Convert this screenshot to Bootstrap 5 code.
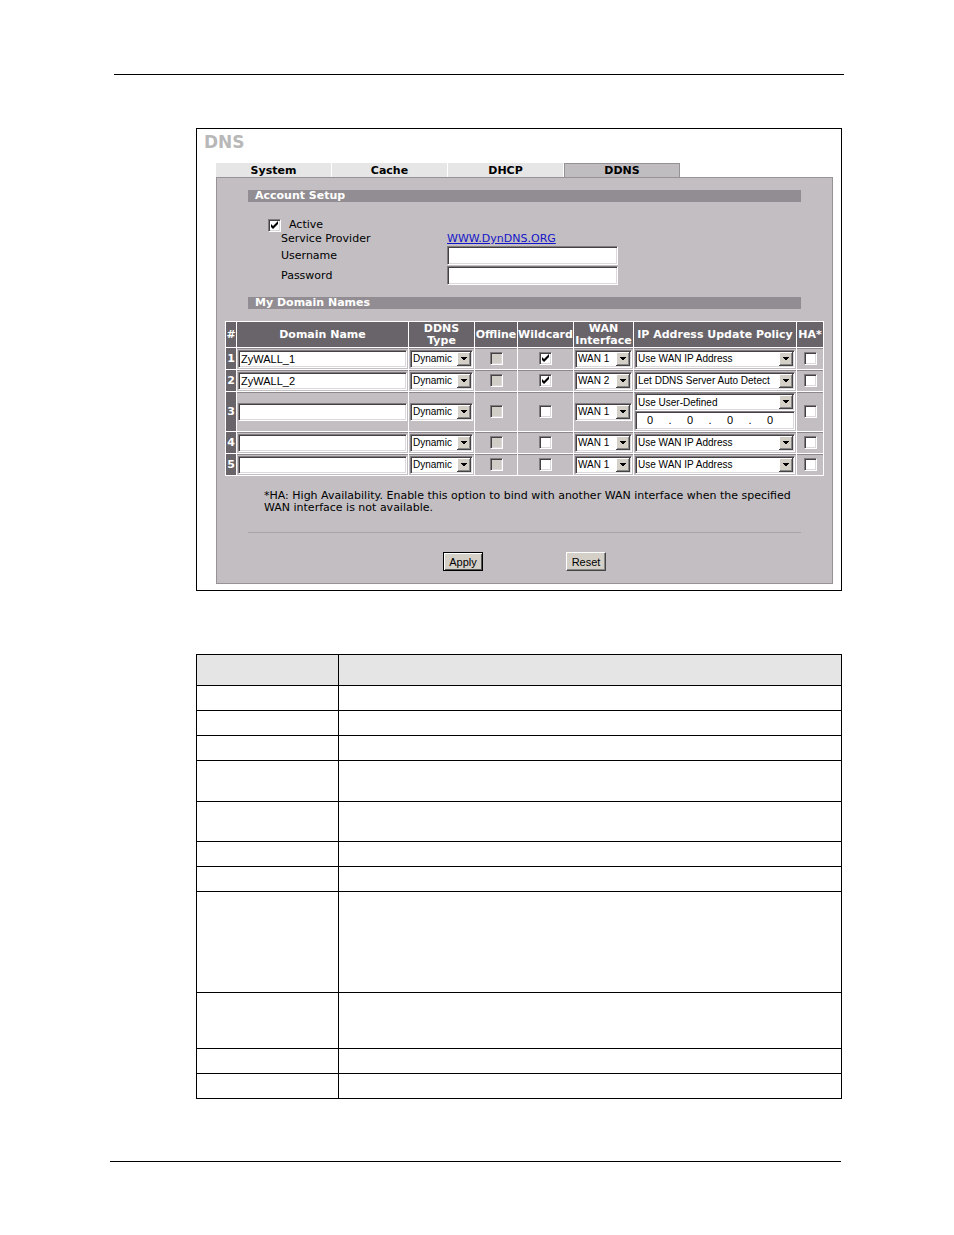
<!DOCTYPE html>
<html lang="en">
<head>
<meta charset="utf-8">
<meta name="viewport" content="width=device-width, initial-scale=1">
<title>DNS - DDNS</title>
<link href="https://cdn.jsdelivr.net/npm/bootstrap@5.3.0/dist/css/bootstrap.min.css" rel="stylesheet">
<style>
body{background:#fff;color:#000;font:11px/15px "DejaVu Sans",sans-serif}
.sheet{padding:74px 110px 0}
.rule{border-top:1px solid #000}
.rule-top{margin:0 0 53px 4px}
.rule-foot{margin:62px 3px 0 0}
.body-col{margin:0 2px 0 86px}
.figure-box{border:1px solid #000;padding:4px 8px 6px 19px}
.page-title{font-size:17px;line-height:18px;font-weight:700;color:#b8b8b8;margin:0 0 12px -12px}
.tab-strip a{flex:0 0 116px;height:14px;line-height:15px;text-align:center;font-weight:700;color:#000;background:#e6e6e6;border-right:1px solid #fff;text-decoration:none}
.tab-strip a.active{line-height:14px;background:#bfbdbf;border:1px solid #959195;border-bottom:0}
.panel{background:#c2bec2;border:1px solid #969296;padding:12px 8px}
.section-bar{background:#928d92;color:#fff;font-size:11px;font-weight:700;line-height:12px;margin:0 23px;padding-left:7px}
.account{margin:16px 23px 12px;line-height:14px}
.account .name-col{width:199px;padding-left:33px;flex:none}
.account a{color:#1414c8;text-decoration:underline}
.account .fields{row-gap:1px}
.sunken{appearance:none;border:1px solid;border-color:#807c80 #fff #fff #807c80;box-shadow:inset 1px 1px 0 #444044,inset -1px -1px 0 #dcd8dc;background-color:#fff;border-radius:0;color:#000;font:11px/13px "Liberation Sans",sans-serif}
.field{height:19px;width:171px;padding:0 2px}
.tick{width:13px;height:13px;display:block;margin:0 auto;background-position:center;background-repeat:no-repeat}
.tick:checked{background-image:url("data:image/svg+xml,%3Csvg xmlns='http://www.w3.org/2000/svg' width='9' height='9'%3E%3Cpath d='M1 3v3l2 2 5-5V0L3 5z'/%3E%3C/svg%3E")}
.tick:disabled{background-color:#d0ccc6}
.drop{display:block;height:18px;width:100%;font-size:10px;padding:0 14px 0 2px;background-repeat:no-repeat;background-position:right 1px center;background-image:url("data:image/svg+xml,%3Csvg xmlns='http://www.w3.org/2000/svg' width='14' height='14' shape-rendering='crispEdges'%3E%3Cpath fill='%23444' d='M0 0h14v14H0z'/%3E%3Cpath fill='%23fff' d='M0 0h13v13H0z'/%3E%3Cpath fill='%23888' d='M1 1h12v12H1z'/%3E%3Cpath fill='%23d4d0c8' d='M1 1h11v11H1z'/%3E%3Cpath d='M4 5h6v1H4zM5 6h4v1H5zM6 7h2v1H6z'/%3E%3C/svg%3E")}
.domains{width:100%;table-layout:fixed;border-collapse:collapse;margin:12px 0 14px}
.domains th,.domains td{border:1px solid #fff;padding:0 1px;vertical-align:middle;text-align:center}
.domains th{background:#69646a;color:#fff;font-weight:700;line-height:12px;white-space:nowrap;padding:0}
.domains td{box-shadow:inset 0 1px 0 #8c888c}
.domains thead tr{height:26px}
.domains tbody tr{height:22px}
.domains tbody tr.two-line{height:40px}
.domains .field{width:100%;height:18px;display:block}
.c-no{width:11px}.c-type{width:66px}.c-off{width:43px}.c-wild{width:56px}.c-wan{width:60px}.c-pol{width:163px}.c-ha{width:27px}
.ip-box{height:19px;padding-left:1px}
.ip-box input{width:26px;border:0;padding:0;background:transparent;text-align:center;font:inherit}
.ip-box span{width:14px;text-align:center}
.note{line-height:12px;margin:0 16px 18px 39px}
.divider{border-top:1px solid #a9a5a5;margin:0 23px 19px}
.push{font:11px/14px "Liberation Sans",sans-serif;color:#000;background:#d4d0c8;border:1px solid;border-color:#fff #444 #444 #fff;box-shadow:inset -1px -1px 0 #888;border-radius:0;height:19px;width:40px;padding:0}
.push-default{border-color:#000;box-shadow:inset 1px 1px 0 #fff,inset -1px -1px 0 #555}
.button-row{gap:83px}
.guide{width:100%;table-layout:fixed;border-collapse:collapse;margin-top:63px}
.guide th,.guide td{border:1px solid #000;padding:0}
.guide th{background:#e5e5e5}
.guide tr{height:25px}
.guide thead tr{height:31px}
.guide tr.lines-2{height:40px}
.guide tr.lines-2-tall{height:41px}
.guide tr.lines-3{height:56px}
.guide tr.lines-6{height:101px}
.c-label{width:142px}
</style>
<script src="https://cdn.jsdelivr.net/npm/bootstrap@5.3.0/dist/js/bootstrap.bundle.min.js"></script>
</head>
<body>
<div class="sheet">
<div class="rule rule-top"></div>
<main class="body-col">
<form class="figure-box">
<h1 class="page-title">DNS</h1>
<nav class="tab-strip d-flex"><a href="#">System</a><a href="#">Cache</a><a href="#">DHCP</a><a href="#" class="active" aria-current="page">DDNS</a></nav>
<div class="panel">
<h2 class="section-bar">Account Setup</h2>
<div class="account">
<div class="d-flex align-items-center ps-3 ms-1"><input type="checkbox" class="sunken tick m-0 me-2" id="active" checked><label for="active">Active</label></div>
<div class="d-flex"><span class="name-col">Service Provider</span><a href="#">WWW.DynDNS.ORG</a></div>
<div class="fields d-grid">
<div class="d-flex align-items-center"><label class="name-col" for="user">Username</label><input class="sunken field" id="user" type="text"></div>
<div class="d-flex align-items-center"><label class="name-col" for="pass">Password</label><input class="sunken field" id="pass" type="password"></div>
</div>
</div>
<h2 class="section-bar">My Domain Names</h2>
<table class="domains">
<colgroup><col class="c-no"><col><col class="c-type"><col class="c-off"><col class="c-wild"><col class="c-wan"><col class="c-pol"><col class="c-ha"></colgroup>
<thead><tr><th>#</th><th>Domain Name</th><th>DDNS<br>Type</th><th>Offline</th><th>Wildcard</th><th>WAN<br>Interface</th><th>IP Address Update Policy</th><th>HA*</th></tr></thead>
<tbody>
<tr><th>1</th><td><input class="sunken field" type="text" value="ZyWALL_1" aria-label="Domain name 1"></td><td><select class="sunken drop" aria-label="Type 1"><option>Dynamic</option></select></td><td><input type="checkbox" class="sunken tick" disabled aria-label="Offline 1"></td><td><input type="checkbox" class="sunken tick" checked aria-label="Wildcard 1"></td><td><select class="sunken drop" aria-label="WAN 1"><option>WAN 1</option></select></td><td><select class="sunken drop" aria-label="Policy 1"><option>Use WAN IP Address</option></select></td><td><input type="checkbox" class="sunken tick" aria-label="HA 1"></td></tr>
<tr><th>2</th><td><input class="sunken field" type="text" value="ZyWALL_2" aria-label="Domain name 2"></td><td><select class="sunken drop" aria-label="Type 2"><option>Dynamic</option></select></td><td><input type="checkbox" class="sunken tick" disabled aria-label="Offline 2"></td><td><input type="checkbox" class="sunken tick" checked aria-label="Wildcard 2"></td><td><select class="sunken drop" aria-label="WAN 2"><option>WAN 2</option></select></td><td><select class="sunken drop" aria-label="Policy 2"><option>Let DDNS Server Auto Detect</option></select></td><td><input type="checkbox" class="sunken tick" aria-label="HA 2"></td></tr>
<tr class="two-line"><th>3</th><td><input class="sunken field" type="text" aria-label="Domain name 3"></td><td><select class="sunken drop" aria-label="Type 3"><option>Dynamic</option></select></td><td><input type="checkbox" class="sunken tick" disabled aria-label="Offline 3"></td><td><input type="checkbox" class="sunken tick" aria-label="Wildcard 3"></td><td><select class="sunken drop" aria-label="WAN 3"><option>WAN 1</option></select></td><td><select class="sunken drop" aria-label="Policy 3"><option>Use User-Defined</option></select><div class="sunken ip-box d-flex align-items-center"><input type="text" value="0" aria-label="Octet 1"><span>.</span><input type="text" value="0" aria-label="Octet 2"><span>.</span><input type="text" value="0" aria-label="Octet 3"><span>.</span><input type="text" value="0" aria-label="Octet 4"></div></td><td><input type="checkbox" class="sunken tick" aria-label="HA 3"></td></tr>
<tr><th>4</th><td><input class="sunken field" type="text" aria-label="Domain name 4"></td><td><select class="sunken drop" aria-label="Type 4"><option>Dynamic</option></select></td><td><input type="checkbox" class="sunken tick" disabled aria-label="Offline 4"></td><td><input type="checkbox" class="sunken tick" aria-label="Wildcard 4"></td><td><select class="sunken drop" aria-label="WAN 4"><option>WAN 1</option></select></td><td><select class="sunken drop" aria-label="Policy 4"><option>Use WAN IP Address</option></select></td><td><input type="checkbox" class="sunken tick" aria-label="HA 4"></td></tr>
<tr><th>5</th><td><input class="sunken field" type="text" aria-label="Domain name 5"></td><td><select class="sunken drop" aria-label="Type 5"><option>Dynamic</option></select></td><td><input type="checkbox" class="sunken tick" disabled aria-label="Offline 5"></td><td><input type="checkbox" class="sunken tick" aria-label="Wildcard 5"></td><td><select class="sunken drop" aria-label="WAN 5"><option>WAN 1</option></select></td><td><select class="sunken drop" aria-label="Policy 5"><option>Use WAN IP Address</option></select></td><td><input type="checkbox" class="sunken tick" aria-label="HA 5"></td></tr>
</tbody>
</table>
<p class="note">*HA: High Availability. Enable this option to bind with another WAN interface when the specified WAN interface is not available.</p>
<div class="divider"></div>
<div class="button-row d-flex justify-content-center"><button type="button" class="push push-default">Apply</button><button type="button" class="push">Reset</button></div>
</div>
</form>
<table class="guide">
<colgroup><col class="c-label"><col></colgroup>
<thead><tr><th></th><th></th></tr></thead>
<tbody>
<tr><td></td><td></td></tr>
<tr><td></td><td></td></tr>
<tr><td></td><td></td></tr>
<tr class="lines-2-tall"><td></td><td></td></tr>
<tr class="lines-2"><td></td><td></td></tr>
<tr><td></td><td></td></tr>
<tr><td></td><td></td></tr>
<tr class="lines-6"><td></td><td></td></tr>
<tr class="lines-3"><td></td><td></td></tr>
<tr><td></td><td></td></tr>
<tr><td></td><td></td></tr>
</tbody>
</table>
</main>
<div class="rule rule-foot"></div>
</div>
</body>
</html>
